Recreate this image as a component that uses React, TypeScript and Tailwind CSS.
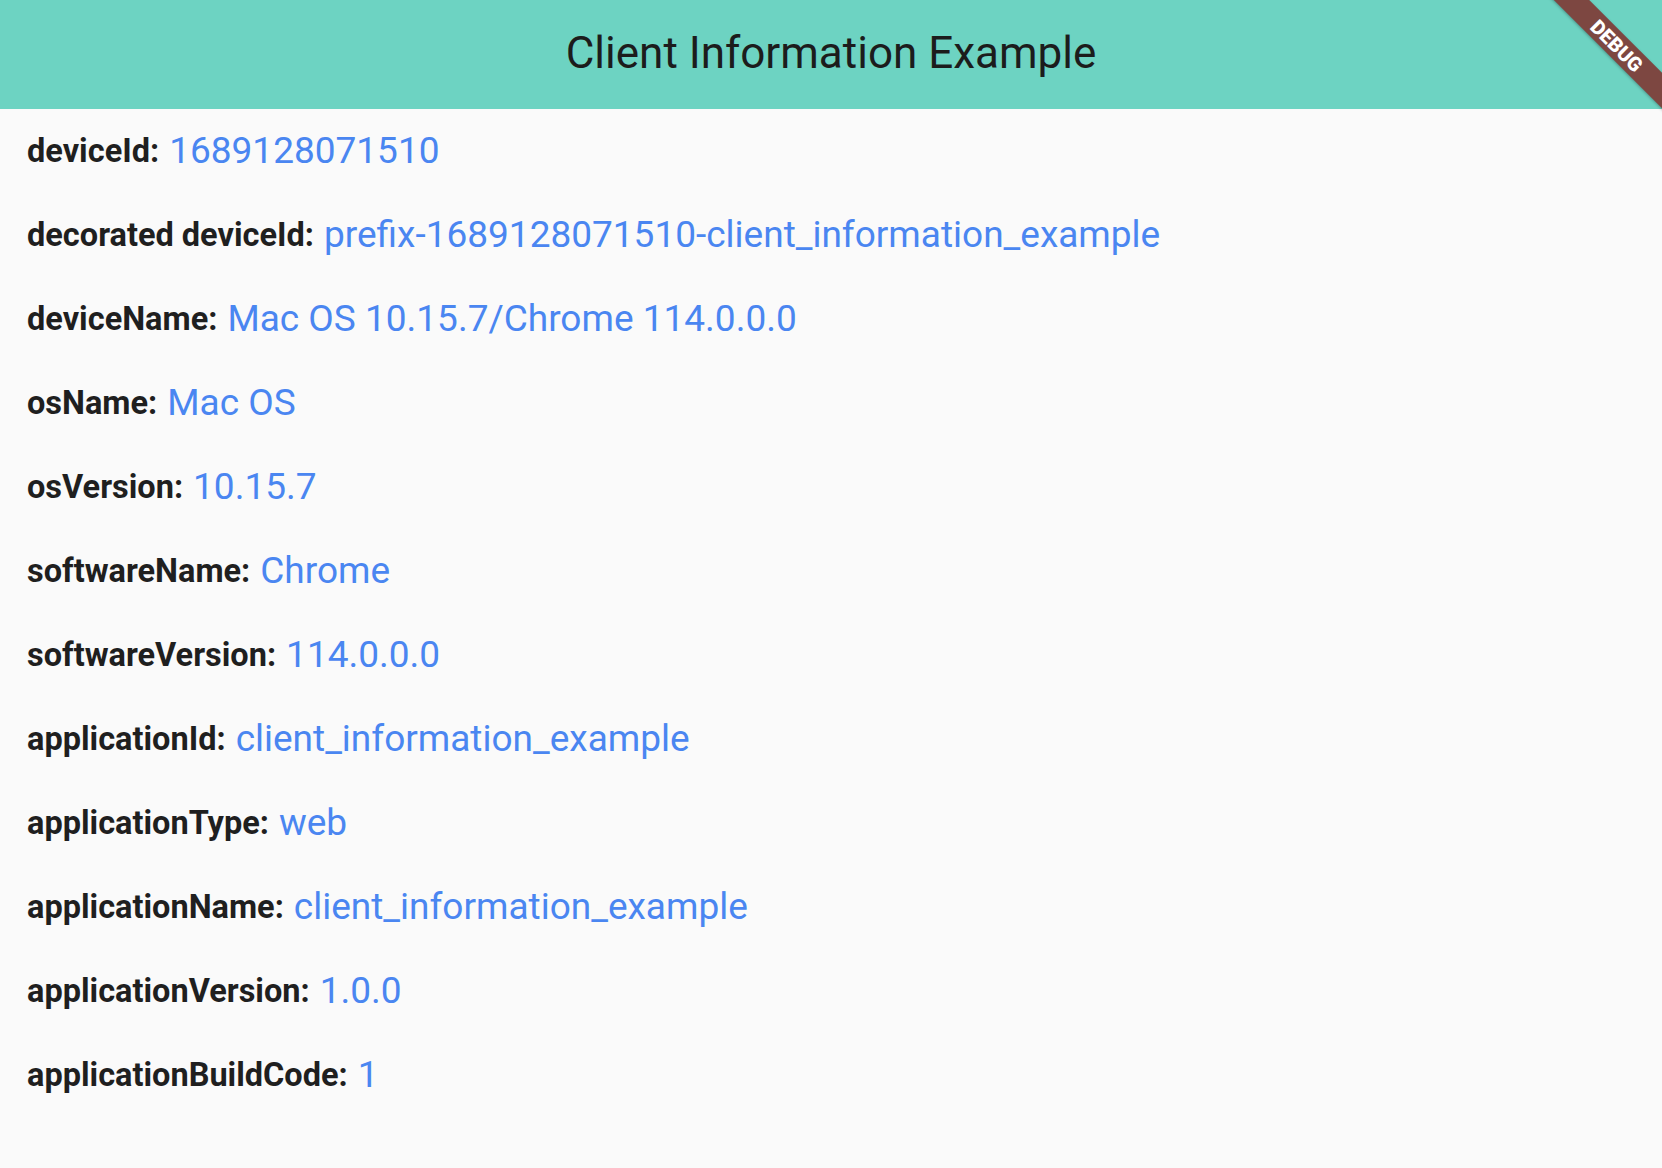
import React from "react";

const rows: [string, string][] = [
  ["deviceId", "1689128071510"],
  ["decorated deviceId", "prefix-1689128071510-client_information_example"],
  ["deviceName", "Mac OS 10.15.7/Chrome 114.0.0.0"],
  ["osName", "Mac OS"],
  ["osVersion", "10.15.7"],
  ["softwareName", "Chrome"],
  ["softwareVersion", "114.0.0.0"],
  ["applicationId", "client_information_example"],
  ["applicationType", "web"],
  ["applicationName", "client_information_example"],
  ["applicationVersion", "1.0.0"],
  ["applicationBuildCode", "1"],
];

export default function App() {
  return (
    <div className="min-h-screen bg-[#fafafa] font-['Roboto','Liberation_Sans',sans-serif] relative overflow-hidden">
      <header className="h-[109px] bg-[#6dd3c2] flex items-center justify-center pb-[3px]">
        <h1 className="text-[44px] text-[#1c1c1c] leading-none">Client Information Example</h1>
      </header>
      <div className="flex flex-col pl-[27px]">
        {rows.map(([label, value]) => (
          <div key={label} className="h-[84px] flex items-center gap-[10px]">
            <span className="text-[32.5px] font-bold text-[#1f1f1f]">{label}:</span>
            <span className="text-[37px] text-[#4a86f1]">{value}</span>
          </div>
        ))}
      </div>
      {/* debug banner */}
      <div className="absolute top-[33px] right-[-55px] w-[200px] h-[25px] rotate-45 bg-[#7d4741] shadow-[0_1px_3px_rgba(0,0,0,0.3)] flex items-center justify-center">
        <span className="text-[20px] leading-none font-black text-white">DEBUG</span>
      </div>
    </div>
  );
}
